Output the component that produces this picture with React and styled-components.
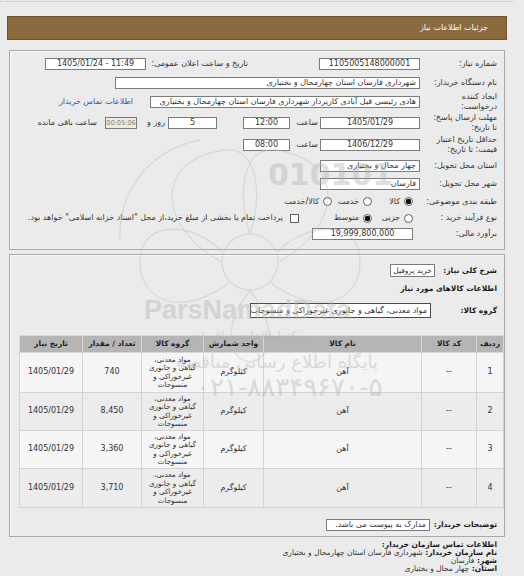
import React from "react";
import styled, { createGlobalStyle } from "styled-components";

const Global = createGlobalStyle`
  html, body { margin: 0; padding: 0; background: #ebebeb; }
  body { font-family: "DejaVu Sans", sans-serif; }
`;

const Page = styled.div`
  position: relative;
  width: 524px;
  height: 576px;
  overflow: hidden;
  background: #ebebeb;
  direction: rtl;
  font-family: "DejaVu Sans", "Liberation Sans", sans-serif;
  font-size: 8px;
  line-height: 10px;
  color: #333;
`;

const TopRule = styled.div`
  margin: 1px 10px 0 0;
  border-top: 1px dotted #c0c0c0;
`;

const TitleBar = styled.div`
  margin: 14px 17px 0 7px;
  height: 22px;
  border: 1px solid #6d5431;
  background: #8b6a3d;
  color: #fff;
  display: flex;
  align-items: center;
  padding-right: 18px;
`;

const Panel = styled.section`
  margin: ${(p) => p.$mt}px 19px 0 9px;
  height: ${(p) => p.$h}px;
  box-sizing: border-box;
  border: 1px solid #a9a9a9;
  box-shadow: inset 1px 1px 0 #f8f8f8;
  padding-top: ${(p) => p.$pt}px;
`;

const Row = styled.div`
  display: flex;
  align-items: center;
  height: ${(p) => p.$h}px;
  padding-right: 7px;
  padding-top: ${(p) => p.$pt || 0}px;
  box-sizing: border-box;
`;

const Label = styled.div`
  width: ${(p) => p.$w || 77}px;
  flex-shrink: 0;
  text-align: right;
  white-space: pre;
  line-height: 10px;
  color: #333;
  ${(p) =>
    p.$bold &&
    `
    font-weight: bold;
    font-size: 7.5px;
    color: #1a1a1a;
  `}
`;

const Caption = styled.span`
  flex-shrink: 0;
  white-space: nowrap;
  margin-right: ${(p) => p.$mr || 0}px;
  width: ${(p) => (p.$w ? `${p.$w}px` : "auto")};
  text-align: right;
`;

const Field = styled.div`
  flex-shrink: 0;
  box-sizing: border-box;
  width: ${(p) => p.$w}px;
  height: ${(p) => p.$h || 12}px;
  margin-right: ${(p) => p.$mr || 0}px;
  border: 1px solid ${(p) => (p.$dark ? "#4a4a4a" : "#7c7c7c")};
  background: ${(p) => (p.$muted ? "#ecebe2" : "#fff")};
  color: ${(p) => (p.$muted ? "#8c8a66" : "#333")};
  text-align: ${(p) => p.$align || "right"};
  direction: ${(p) => (p.$ltr ? "ltr" : "rtl")};
  font-size: ${(p) => p.$fs || 8}px;
  padding: 0 ${(p) => (p.$tight ? 0 : 3)}px;
  line-height: ${(p) => (p.$h || 12) - 2}px;
  white-space: nowrap;
  overflow: hidden;
`;

const Link = styled.span`
  margin-right: ${(p) => p.$mr}px;
  color: #3d4fa6;
  white-space: nowrap;
`;

const Option = styled.div`
  display: flex;
  align-items: center;
  gap: 4px;
  flex-shrink: 0;
  width: ${(p) => (p.$w ? `${p.$w}px` : "auto")};
  margin-right: ${(p) => p.$mr || 0}px;
  white-space: nowrap;
`;

const Radio = styled.span`
  width: 9px;
  height: 9px;
  box-sizing: border-box;
  border-radius: 50%;
  border: 1px solid #5f5f5f;
  background: ${(p) =>
    p.$on ? "radial-gradient(circle, #0d0d0d 0 2.6px, #fff 3.1px)" : "#fff"};
  flex-shrink: 0;
`;

const Check = styled.span`
  width: 9px;
  height: 9px;
  box-sizing: border-box;
  border: 1px solid #5f5f5f;
  background: #fff;
  flex-shrink: 0;
`;

const CheckText = styled.span`
  margin-right: 3px;
`;

const Table = styled.table`
  width: 484px;
  margin: 10px 0 0 0;
  border-collapse: collapse;
  table-layout: fixed;
  border: 1px solid #c2c2c2;
`;

const Th = styled.th`
  height: 16px;
  padding: 0;
  background: #b5b5b5;
  color: #222;
  font-weight: bold;
  font-size: 7.5px;
  border: 1px solid #d7d7d7;
  text-align: center;
  line-height: 10px;
`;

const Tr = styled.tr`
  height: ${(p) => p.$h}px;
  background: ${(p) => (p.$alt ? "#ececec" : "#f5f5f5")};
`;

const Td = styled.td`
  border: 1px solid #d3d3d3;
  text-align: center;
  padding: 0 1px;
  line-height: 8.5px;
  white-space: pre;
  color: #333;
  font-size: ${(p) => (p.$small ? 7.2 : 8)}px;
  overflow: visible;
`;

const Footer = styled.div`
  padding: 4px 27px 0 0;
  line-height: 8px;
  font-size: 7.5px;
`;

const FootLine = styled.div`
  white-space: nowrap;
`;

const B = styled.b`
  color: #1a1a1a;
`;

/* faint site stamp laid over the form */
const Stamp = styled.div`
  position: absolute;
  inset: 0;
  pointer-events: none;
  opacity: 0.4;
`;

const StampText = styled.div`
  position: absolute;
  left: ${(p) => p.$x}px;
  top: ${(p) => p.$y}px;
  font-size: ${(p) => p.$s}px;
  line-height: 1;
  font-weight: ${(p) => p.$w || "bold"};
  color: #b0b0b0;
  font-family: ${(p) => p.$f || '"DejaVu Sans", sans-serif'};
  white-space: nowrap;
  direction: ltr;
`;

const columns = [
  { key: "idx", title: "ردیف", w: 27 },
  { key: "code", title: "کد کالا", w: 55 },
  { key: "name", title: "نام کالا", w: 158 },
  { key: "unit", title: "واحد شمارش", w: 60 },
  { key: "group", title: "گروه کالا", w: 62, small: true },
  { key: "qty", title: "تعداد / مقدار", w: 59 },
  { key: "date", title: "تاریخ نیاز", w: 63 },
];

const groupName = "مواد معدنی،\nگیاهی و جانوری\nغیرخوراکی و\nمنسوجات";

const items = [
  { idx: "1", qty: "740", h: 40 },
  { idx: "2", qty: "8,450", h: 38 },
  { idx: "3", qty: "3,360", h: 38 },
  { idx: "4", qty: "3,710", h: 39 },
].map((r) => ({
  ...r,
  code: "--",
  name: "آهن",
  unit: "کیلوگرم",
  group: groupName,
  date: "1405/01/29",
}));

export default function App() {
  return (
    <Page>
      <Global />
      <TopRule />
      <TitleBar>جزئیات اطلاعات نیاز</TitleBar>

      <Panel $mt={10} $h={200} $pt={4}>
        <Row $h={18}>
          <Label>شماره نیاز:</Label>
          <Field $w={101} $align="center">1105005148000001</Field>
          <Caption $mr={71} $w={102}>تاریخ و ساعت اعلان عمومی:</Caption>
          <Field $w={101} $align="center" $ltr>1405/01/24 - 11:49</Field>
        </Row>
        <Row $h={19}>
          <Label>نام دستگاه خریدار:</Label>
          <Field $w={305}>شهرداری فارسان استان چهارمحال و بختیاری</Field>
        </Row>
        <Row $h={20}>
          <Label>{"ایجاد کننده\nدرخواست:"}</Label>
          <Field $w={270}>
            هادی رئیسی قیل آبادی کارپرداز شهرداری فارسان استان چهارمحال و بختیاری
          </Field>
          <Link $mr={17}>اطلاعات تماس خریدار</Link>
        </Row>
        <Row $h={22}>
          <Label>{"مهلت ارسال پاسخ:\nتا تاریخ:"}</Label>
          <Field $w={100} $align="center">1405/01/29</Field>
          <Caption $mr={2} $w={25}>ساعت</Caption>
          <Field $w={47} $mr={3} $align="center">12:00</Field>
          <Field $w={49} $mr={26} $align="center">5</Field>
          <Caption $mr={3} $w={17}>روز و</Caption>
          <Field $w={32} $mr={11} $align="center" $muted $ltr $tight $fs={6.6}>
            00:05:06
          </Field>
          <Caption $mr={8}>ساعت باقی مانده</Caption>
        </Row>
        <Row $h={22}>
          <Label>{"حداقل تاریخ اعتبار\nقیمت: تا تاریخ:"}</Label>
          <Field $w={100} $align="center">1406/12/29</Field>
          <Caption $mr={2} $w={25}>ساعت</Caption>
          <Field $w={47} $mr={3} $align="center">08:00</Field>
        </Row>
        <Row $h={19}>
          <Label>استان محل تحویل:</Label>
          <Field $w={100}>چهار محال و بختیاری</Field>
        </Row>
        <Row $h={18}>
          <Label>شهر محل تحویل:</Label>
          <Field $w={100}>فارسان</Field>
        </Row>
        <Row $h={17}>
          <Label>طبقه بندی موضوعی:</Label>
          <Option $w={41} $mr={7}>
            <Radio $on />
            کالا
          </Option>
          <Option $w={40}>
            <Radio />
            خدمت
          </Option>
          <Option>
            <Radio />
            کالا/خدمت
          </Option>
        </Row>
        <Row $h={16}>
          <Label>نوع فرآیند خرید :</Label>
          <Option $w={41} $mr={7}>
            <Radio />
            جزیی
          </Option>
          <Option $w={73}>
            <Radio $on />
            متوسط
          </Option>
          <Option>
            <Check />
            <CheckText>
              پرداخت تمام یا بخشی از مبلغ خرید،از محل "اسناد خزانه اسلامی" خواهد بود.
            </CheckText>
          </Option>
        </Row>
        <Row $h={16}>
          <Label>برآورد مالی:</Label>
          <Field $w={101} $mr={7} $align="center">19,999,800,000</Field>
        </Row>
      </Panel>

      <Panel $mt={4} $h={283} $pt={5}>
        <Row $h={21}>
          <Label $w={62} $bold>شرح کلی نیاز:</Label>
          <Field $w={45} $h={13} $fs={7.5} $tight $align="center">خرید پروفیل</Field>
        </Row>
        <Row $h={15}>
          <Label $w={200} $bold>اطلاعات کالاهای مورد نیاز</Label>
        </Row>
        <Row $h={29}>
          <Label $w={66} $bold>گروه کالا:</Label>
          <Field $w={181} $h={15} $dark>
            مواد معدنی، گیاهی و جانوری غیرخوراکی و منسوجات
          </Field>
        </Row>

        <Table>
          <colgroup>
            {columns.map((c) => (
              <col key={c.key} style={{ width: c.w }} />
            ))}
          </colgroup>
          <thead>
            <tr>
              {columns.map((c) => (
                <Th key={c.key}>{c.title}</Th>
              ))}
            </tr>
          </thead>
          <tbody>
            {items.map((r, i) => (
              <Tr key={r.idx} $h={r.h} $alt={i % 2 === 1}>
                {columns.map((c) => (
                  <Td key={c.key} $small={c.small}>
                    {r[c.key]}
                  </Td>
                ))}
              </Tr>
            ))}
          </tbody>
        </Table>

        <Row $h={29} $pt={4}>
          <Label $w={67} $bold>توضیحات خریدار:</Label>
          <Field $w={104}>مدارک به پیوست می باشد.</Field>
        </Row>
      </Panel>

      <Footer>
        <FootLine>
          <B>اطلاعات تماس سازمان خریدار:</B>
        </FootLine>
        <FootLine>
          <B>نام سازمان خریدار: </B>شهرداری فارسان استان چهارمحال و بختیاری
        </FootLine>
        <FootLine>
          <B>شهر: </B>فارسان
        </FootLine>
        <FootLine>
          <B>استان: </B>چهار محال و بختیاری
        </FootLine>
      </Footer>

      <Stamp>
        <svg width="524" height="576" viewBox="0 0 524 576" fill="none" stroke="#bdbdbd" strokeWidth="1.3">
          <circle cx="250" cy="262" r="28" />
          <path d="M222 262 C 160 230, 150 160, 225 150 C 260 146, 262 200, 250 234" />
          <path d="M278 262 C 340 230, 350 160, 275 150 C 240 146, 238 200, 250 234" />
          <path d="M230 282 C 180 320, 140 300, 140 262 C 140 215, 200 225, 222 252" />
          <path d="M270 282 C 320 320, 360 300, 360 262 C 360 215, 300 225, 278 252" />
          <path d="M250 290 C 220 330, 230 360, 250 362 C 270 360, 280 330, 250 290" />
          <path d="M120 240 C 118 190, 150 150, 200 140" />
        </svg>
        <StampText $x={268} $y={160} $s={30}>010101</StampText>
        <StampText $x={144} $y={297} $s={27} $f='"Liberation Sans", sans-serif'>
          ParsNamadData
        </StampText>
        <StampText $x={190} $y={330} $s={12} $w="normal">مرکز اطلاعات مناقصات</StampText>
        <StampText $x={176} $y={353} $s={18} $w="normal">پایگاه اطلاع رسانی مناقصه</StampText>
        <StampText $x={196} $y={374} $s={26} $w="normal">۰۲۱-۸۸۳۴۹۶۷۰-۵</StampText>
      </Stamp>
    </Page>
  );
}
